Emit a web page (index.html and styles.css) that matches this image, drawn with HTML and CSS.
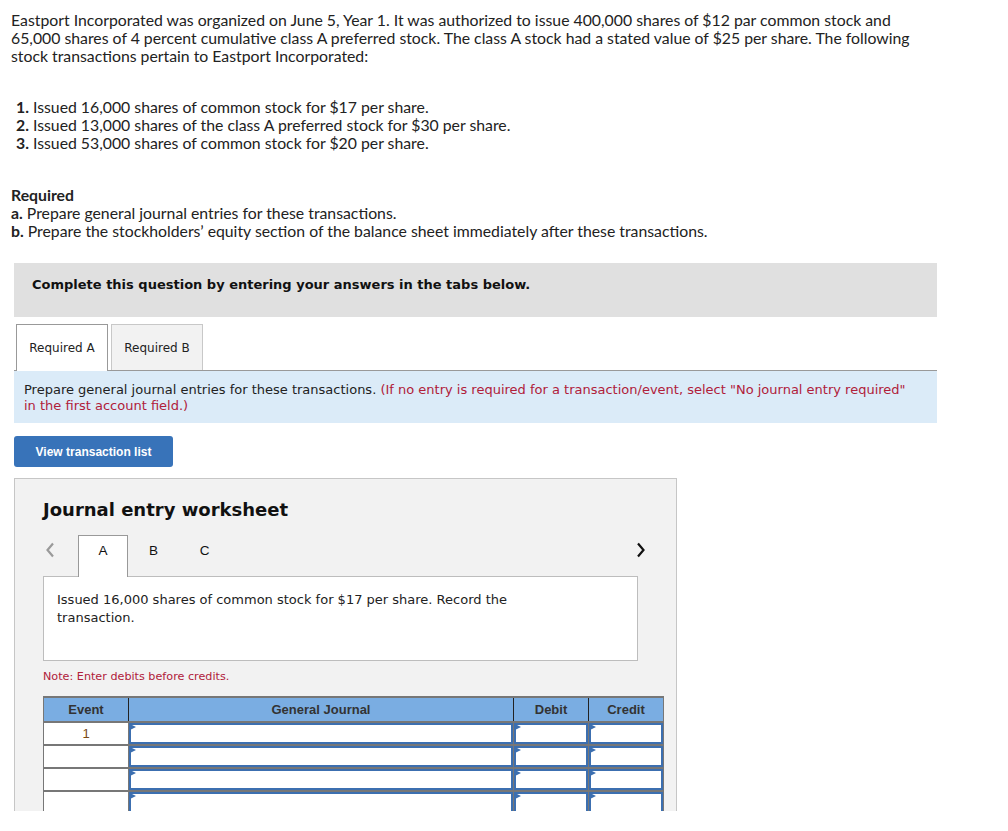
FILE: index.html
```html
<!DOCTYPE html>
<html lang="en">
<head>
<meta charset="utf-8">
<link rel="stylesheet" href="styles.css">
</head>
<body>
<div class="page">
  <p class="intro">Eastport Incorporated was organized on June 5, Year 1. It was authorized to issue 400,000 shares of $12 par common stock and 65,000 shares of 4 percent cumulative class A preferred stock. The class A stock had a stated value of $25 per share. The following stock transactions pertain to Eastport Incorporated:</p>

  <ol class="steps">
    <li><b>1.</b> Issued 16,000 shares of common stock for $17 per share.</li>
    <li><b>2.</b> Issued 13,000 shares of the class A preferred stock for $30 per share.</li>
    <li><b>3.</b> Issued 53,000 shares of common stock for $20 per share.</li>
  </ol>

  <div class="req">
    <b>Required</b><br>
    <b>a.</b> Prepare general journal entries for these transactions.<br>
    <b>b.</b> Prepare the stockholders’ equity section of the balance sheet immediately after these transactions.
  </div>

  <div class="howto">Complete this question by entering your answers in the tabs below.</div>

  <div class="tabs">
    <div class="tab active">Required A</div>
    <div class="tab">Required B</div>
  </div>

  <div class="info">Prepare general journal entries for these transactions. <span class="red">(If no entry is required for a transaction/event, select "No journal entry required" in the first account field.)</span></div>

  <button class="btn_list">View transaction list</button>

  <div class="sheet">
    <h2>Journal entry worksheet</h2>
    <div class="nav">
      <span class="arrow prev"><svg width="10" height="16" viewBox="0 0 10 16"><path d="M8 1.5 L2.5 8 L8 14.5" fill="none" stroke="#9a9a9a" stroke-width="2.2"/></svg></span>
      <div class="ntab on">A</div>
      <div class="ntab">B</div>
      <div class="ntab">C</div>
      <span class="arrow next"><svg width="10" height="16" viewBox="0 0 10 16"><path d="M2 1.5 L7.5 8 L2 14.5" fill="none" stroke="#111" stroke-width="2.2"/></svg></span>
    </div>
    <div class="desc"><p>Issued 16,000 shares of common stock for $17 per share. Record the transaction.</p></div>
    <div class="note">Note: Enter debits before credits.</div>

    <table class="jrnl">
      <colgroup>
        <col class="c_ev"><col class="c_acct"><col class="c_amt"><col class="c_amt">
      </colgroup>
      <tr>
        <th>Event</th>
        <th>General Journal</th>
        <th>Debit</th>
        <th>Credit</th>
      </tr>
      <tr>
        <td class="ev">1</td>
        <td class="in"><div class="fld"></div></td>
        <td class="in"><div class="fld"></div></td>
        <td class="in"><div class="fld"></div></td>
      </tr>
      <tr>
        <td class="ev"></td>
        <td class="in"><div class="fld"></div></td>
        <td class="in"><div class="fld"></div></td>
        <td class="in"><div class="fld"></div></td>
      </tr>
      <tr>
        <td class="ev"></td>
        <td class="in"><div class="fld"></div></td>
        <td class="in"><div class="fld"></div></td>
        <td class="in"><div class="fld"></div></td>
      </tr>
      <tr>
        <td class="ev"></td>
        <td class="in"><div class="fld"></div></td>
        <td class="in"><div class="fld"></div></td>
        <td class="in"><div class="fld"></div></td>
      </tr>
    </table>
  </div>
</div>
</body>
</html>
```

FILE: styles.css
```css
body {margin: 0; background: #fff; color: #222; font-family: Lato, "Liberation Sans", sans-serif; font-size: 15.8px;}
.page {padding: 0 0 0 11px; width: 926px; height: 811px; overflow: hidden;}
.intro {margin: 11px 0 0; line-height: 18px;}
.steps {list-style: none; margin: 33px 0 0; padding: 0 0 0 5px; line-height: 18px;}
.req {margin-top: 34px; line-height: 18px;}

.howto {margin: 23px 0 0 3px; height: 54px; box-sizing: border-box; padding: 14px 18px 0; background: #e0e0e0;
  font-family: "DejaVu Sans", Verdana, sans-serif; font-weight: bold; font-size: 13px; line-height: 16px; color: #111;}

.tabs {display: flex; gap: 3px; margin: 7px 0 0 3px; padding-left: 2px; border-bottom: 1px solid #999;}
.tab {width: 92px; height: 46px; box-sizing: border-box; border: 1px solid #c8c8c8; border-bottom: none; background: #f2f2f2;
  display: flex; align-items: center; justify-content: center;
  font-family: "DejaVu Sans", Verdana, sans-serif; font-size: 12px; color: #222;}
.tab.active {background: #fff; border-color: #999; height: 47px; margin-bottom: -1px;}

.info {margin-left: 3px; background: #dbebf8; padding: 11px 20px 9px 10px; line-height: 16px;
  font-family: "DejaVu Sans", Verdana, sans-serif; font-size: 13px; color: #222;}
.red {color: #b0203a;}

.btn_list {display: block; margin: 13px 0 0 3px; width: 159px; height: 31px; border: none; border-radius: 3px; background: #3873b9; color: #fff;
  font-family: "Liberation Sans", Arial, sans-serif; font-weight: bold; font-size: 12px; padding: 0;}

.sheet {margin: 11px 0 0 3px; width: 663px; box-sizing: border-box; background: #f2f2f2; border: 1px solid #c6c6c6; padding: 19px 13px 40px 28px;
  font-family: "DejaVu Sans", Verdana, sans-serif;}
.sheet h2 {margin: 0; font-size: 18px; line-height: 24px; color: #111;}

.nav {display: flex; align-items: flex-end; margin-top: 13px; height: 41px; width: 620px;}
.arrow {display: flex; align-self: flex-start; margin-top: 7px;}
.prev {width: 33px; padding-left: 2px;}
.next {margin-left: auto; margin-right: 17px;}
.ntab {width: 51px; height: 41px; box-sizing: border-box; display: flex; justify-content: center; padding-top: 8px;
  font-family: "Liberation Sans", Arial, sans-serif; font-size: 13.5px; color: #111;}
.ntab.on {width: 50px; background: #fff; border: 1px solid #999; border-bottom: none; height: 42px; margin-bottom: -1px; padding-top: 7px; position: relative; z-index: 1;}

.desc {width: 595px; height: 85px; box-sizing: border-box; background: #fff; border: 1px solid #bdbdbd; padding: 14px 13px 0; font-size: 13px; line-height: 18px; color: #222;}
.desc p {margin: 0; max-width: 500px;}
.note {margin-top: 8px; font-size: 11.2px; line-height: 16px; color: #b0203a;}

.jrnl {margin-top: 11px; width: 620px; border-collapse: collapse; table-layout: fixed; background: #fff;}
.c_ev {width: 85px;}
.c_acct {width: 385px;}
.c_amt {width: 75px;}
.jrnl th {height: 23px; background: #7aade2; border: 1px solid #222; border-top: 2px solid #777; padding: 0;
  font-family: "Liberation Sans", Arial, sans-serif; font-size: 13px; font-weight: bold; color: #333;}
.jrnl th:first-child {border-left: 1px solid #777;}
.jrnl th:last-child {border-right: 1px solid #777;}
.jrnl td {border: 1px solid #777; border-top: 2px solid #777; padding: 0; height: 21px;}
.jrnl td.ev {text-align: center; font-family: "Liberation Sans", Arial, sans-serif; font-size: 13px; color: #7a4a14; vertical-align: top; padding-top: 3px; height: 18px;}
.jrnl td.in {border-left: 1px solid #555;}
.fld {position: relative; height: 17px; border: 2px solid #3c6fb0; background: #fff;}
.fld::before {content: ""; position: absolute; left: -1px; top: -1px; border-left: 6px solid #3c6fb0; border-top: 3px solid transparent; border-bottom: 3px solid transparent;}
```
